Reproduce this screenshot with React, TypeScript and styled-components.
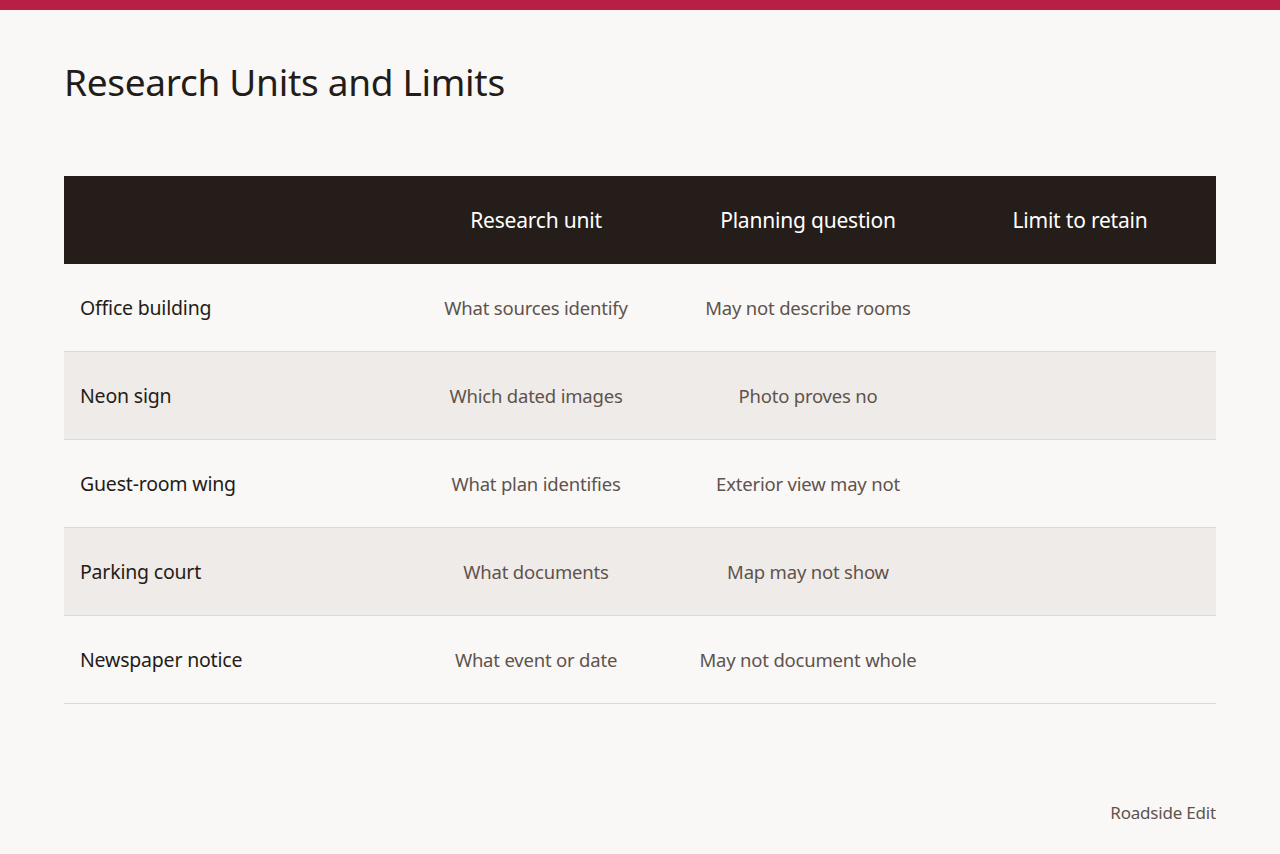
import React from "react";
import styled, { createGlobalStyle } from "styled-components";

const G = createGlobalStyle`
  body { margin: 0; background: #f9f8f6; font-family: "Source Sans Pro", "Noto Sans", sans-serif; }
`;
const Page = styled.div`
  min-height: 854px; border-top: 10px solid #b91e47; box-sizing: border-box;
  padding: 0 64px; display: flex; flex-direction: column;
`;
const Title = styled.h1`
  margin: 50px 0 0; font-weight: 400; font-size: 37px; line-height: 44px; color: #241c18; letter-spacing: -0.3px;
`;
const Table = styled.div`
  margin-top: 72px; display: grid; grid-template-columns: 336px 272px 272px 272px;
`;
const Head = styled.div<{ $first?: boolean }>`
  background: #251d1a; color: #fff; height: 88px; display: flex; align-items: center; justify-content: center;
  font-size: 21px; letter-spacing: -0.2px;
`;
const Cell = styled.div<{ $alt: boolean; $first?: boolean }>`
  height: 88px; box-sizing: border-box; display: flex; align-items: center;
  justify-content: ${p => (p.$first ? "flex-start" : "center")};
  padding-left: ${p => (p.$first ? "16px" : "0")};
  background: ${p => (p.$alt ? "#efebe8" : "transparent")};
  border-bottom: 1px solid #dcd8d5;
  font-size: ${p => (p.$first ? "19.5px" : "18.5px")};
  color: ${p => (p.$first ? "#241c18" : "#5e534d")};
  letter-spacing: -0.2px;
`;
const Footer = styled.div`
  margin-top: auto; margin-bottom: 30px; align-self: flex-end; font-size: 17px; color: #5e534d; letter-spacing: -0.2px;
`;

const rows = [
  ["Office building", "What sources identify", "May not describe rooms"],
  ["Neon sign", "Which dated images", "Photo proves no"],
  ["Guest-room wing", "What plan identifies", "Exterior view may not"],
  ["Parking court", "What documents", "Map may not show"],
  ["Newspaper notice", "What event or date", "May not document whole"],
];

export default function App() {
  return (
    <Page>
      <G />
      <Title>Research Units and Limits</Title>
      <Table>
        <Head />
        <Head>Research unit</Head>
        <Head>Planning question</Head>
        <Head>Limit to retain</Head>
        {rows.map((r, i) => (
          <React.Fragment key={i}>
            <Cell $alt={i % 2 === 1} $first>{r[0]}</Cell>
            <Cell $alt={i % 2 === 1}>{r[1]}</Cell>
            <Cell $alt={i % 2 === 1}>{r[2]}</Cell>
            <Cell $alt={i % 2 === 1} />
          </React.Fragment>
        ))}
      </Table>
      <Footer>Roadside Edit</Footer>
    </Page>
  );
}
